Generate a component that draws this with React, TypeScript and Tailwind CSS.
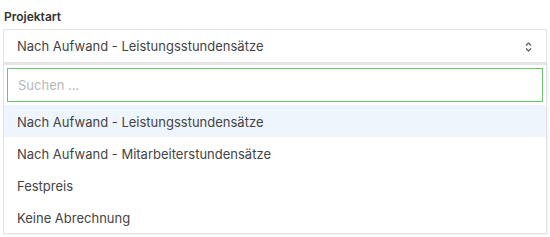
const options = [
  "Nach Aufwand - Leistungsstundensätze",
  "Nach Aufwand - Mitarbeiterstundensätze",
  "Festpreis",
  "Keine Abrechnung",
];

export default function App() {
  return (
    <div className="h-[237px] w-[550px] bg-white font-['Inter','Noto_Sans',sans-serif] text-[#3d3d3d]">
      <div className="ml-[3px] w-[544px] pt-[9px]">
        <label className="block pl-[1px] text-[12px] font-semibold leading-[16px] text-[#333]">
          Projektart
        </label>
        <div className="mt-[4px] flex h-[34px] items-center justify-between border border-[#e2e2e2] pl-[13px] pr-[14px] pt-[1px] text-[13px] text-[#444]">
          <span>Nach Aufwand - Leistungsstundensätze</span>
          <svg width="7" height="10" viewBox="0 0 7 10" fill="none" stroke="#555" strokeWidth="1.2">
            <path d="M1 3.5 L3.5 1 L6 3.5" />
            <path d="M1 6.5 L3.5 9 L6 6.5" />
          </svg>
        </div>
        <div className="border border-t-2 border-[#e2e2e2] border-t-[#e6e6e6] shadow-[1px_1px_2px_rgba(0,0,0,0.06)]">
          <div className="px-[3px] pt-[3px] pb-[3px]">
            <input
              className="h-[34px] w-full border border-[#6cc46c] px-[10px] text-[13px] text-[#444] outline-none placeholder:text-[#b8b8b8]"
              placeholder="Suchen ..."
            />
          </div>
          {options.map((o, i) => (
            <div
              key={o}
              className={
                i === 0
                  ? "flex h-[32px] items-center bg-[#eff5fd] pl-[13px] pt-[3px] text-[13px] text-[#444]"
                  : "flex h-[32px] items-center pl-[13px] pt-[3px] text-[13px] text-[#444]"
              }
            >
              {o}
            </div>
          ))}
        </div>
      </div>
    </div>
  );
}
